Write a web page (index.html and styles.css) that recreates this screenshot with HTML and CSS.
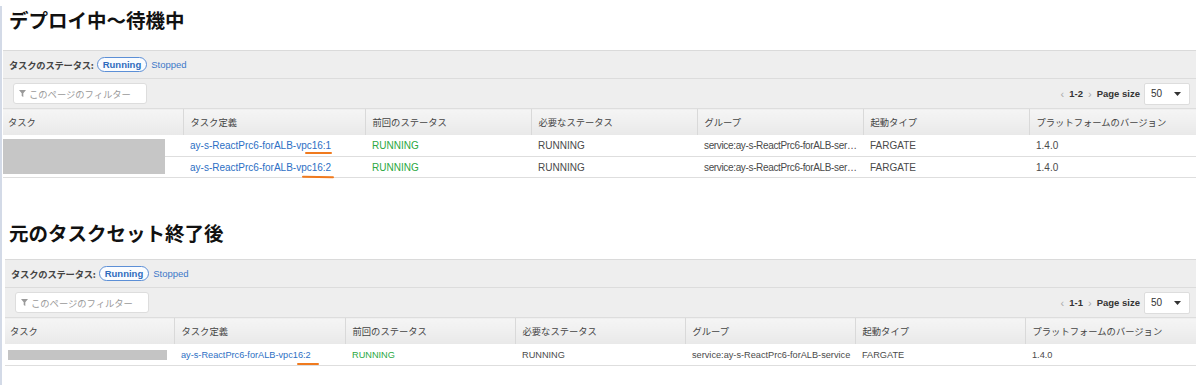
FILE: index.html
```html
<!DOCTYPE html>
<html lang="ja">
<head>
<meta charset="utf-8">
<link rel="stylesheet" href="styles.css">
</head>
<body>
<div class="page">
  <section class="sec sec1">
    <h2 class="title">デプロイ中～待機中</h2>
    <div class="panel">
      <div class="status-bar">
        <span class="status-label">タスクのステータス:</span>
        <span class="pill">Running</span>
        <span class="stopped">Stopped</span>
      </div>
      <div class="toolbar">
        <div class="filter">
          <svg class="funnel" width="7" height="7" viewBox="0 0 7 7"><path d="M0 0H7L4.3 3.2V7L2.7 6V3.2Z" fill="#9a9a9a"/></svg>
          <span class="placeholder">このページのフィルター</span>
        </div>
        <div class="pager">
          <span class="arrow">‹</span>
          <span class="range">1-2</span>
          <span class="arrow">›</span>
          <span class="ps">Page size</span>
          <div class="select"><span>50</span><svg width="7" height="4" viewBox="0 0 7 4"><path d="M0 0H7L3.5 4Z" fill="#333"/></svg></div>
        </div>
      </div>
      <div class="table-wrap">
        <table class="grid">
          <colgroup>
            <col class="c1a"><col class="c2a"><col class="c3a"><col class="c3a"><col class="c3a"><col class="c3a"><col>
          </colgroup>
          <thead>
            <tr><th>タスク</th><th>タスク定義</th><th>前回のステータス</th><th>必要なステータス</th><th>グループ</th><th>起動タイプ</th><th>プラットフォームのバージョン</th></tr>
          </thead>
          <tbody>
            <tr>
              <td></td>
              <td class="lk"><span class="link">ay-s-ReactPrc6-forALB-vpc<span class="tail">16:1<i class="ul ul1"></i></span></span></td>
              <td class="green">RUNNING</td>
              <td>RUNNING</td>
              <td class="grp">service:ay-s-ReactPrc6-forALB-service</td>
              <td>FARGATE</td>
              <td>1.4.0</td>
            </tr>
            <tr>
              <td></td>
              <td class="lk"><span class="link">ay-s-ReactPrc6-forALB-vpc<span class="tail">16:2<i class="ul ul2"></i></span></span></td>
              <td class="green">RUNNING</td>
              <td>RUNNING</td>
              <td class="grp">service:ay-s-ReactPrc6-forALB-service</td>
              <td>FARGATE</td>
              <td>1.4.0</td>
            </tr>
          </tbody>
        </table>
        <div class="redact"></div>
      </div>
    </div>
  </section>

  <section class="sec sec2">
    <h2 class="title">元のタスクセット終了後</h2>
    <div class="panel">
      <div class="status-bar">
        <span class="status-label">タスクのステータス:</span>
        <span class="pill">Running</span>
        <span class="stopped">Stopped</span>
      </div>
      <div class="toolbar">
        <div class="filter">
          <svg class="funnel" width="7" height="7" viewBox="0 0 7 7"><path d="M0 0H7L4.3 3.2V7L2.7 6V3.2Z" fill="#9a9a9a"/></svg>
          <span class="placeholder">このページのフィルター</span>
        </div>
        <div class="pager">
          <span class="arrow">‹</span>
          <span class="range">1-1</span>
          <span class="arrow">›</span>
          <span class="ps">Page size</span>
          <div class="select"><span>50</span><svg width="7" height="4" viewBox="0 0 7 4"><path d="M0 0H7L3.5 4Z" fill="#333"/></svg></div>
        </div>
      </div>
      <div class="table-wrap">
        <table class="grid">
          <colgroup>
            <col class="c1b"><col class="c2b"><col class="c3b"><col class="c3b"><col class="c3b"><col class="c3b"><col>
          </colgroup>
          <thead>
            <tr><th>タスク</th><th>タスク定義</th><th>前回のステータス</th><th>必要なステータス</th><th>グループ</th><th>起動タイプ</th><th>プラットフォームのバージョン</th></tr>
          </thead>
          <tbody>
            <tr class="single">
              <td class="barcell"><span class="bar"></span></td>
              <td class="lk"><span class="link">ay-s-ReactPrc6-forALB-vpc<span class="tail">16:2<i class="ul ul3"></i></span></span></td>
              <td class="green">RUNNING</td>
              <td>RUNNING</td>
              <td class="grp">service:ay-s-ReactPrc6-forALB-service</td>
              <td>FARGATE</td>
              <td>1.4.0</td>
            </tr>
          </tbody>
        </table>
      </div>
    </div>
  </section>
</div>
</body>
</html>
```

FILE: styles.css
```css
html, body {
  margin: 0;
  padding: 0;
  background: #ffffff;
}
body {
  font-family: "Liberation Sans", Arial, "Noto Sans CJK JP", sans-serif;
  font-size: 10px;
  color: #444;
}
.page {
  border-left: 2px solid #d3dae7;
  min-height: 385px;
  box-sizing: border-box;
  padding-right: 4px;
}
.title {
  margin: 6px 0 16px 0;
  padding-left: 7px;
  font-family: "Noto Sans CJK JP", sans-serif;
  font-size: 19.5px;
  line-height: 28px;
  font-weight: 700;
  color: #111;
}
.sec2 .title {
  margin-top: 41px;
  margin-bottom: 12px;
}
.panel {
  background: #eeeeee;
  border-top: 1px solid #dadada;
}
.sec1 .panel { margin-left: 1px; }
.sec2 .panel { margin-left: 3px; }

.status-bar {
  height: 27px;
  display: flex;
  align-items: center;
  padding-left: 6px;
  border-bottom: 1px solid #dcdcdc;
  font-size: 9.5px;
}
.status-label {
  font-family: "Noto Sans CJK JP", sans-serif;
  font-weight: 700;
  font-size: 9.3px;
  color: #444;
  letter-spacing: -0.2px;
}
.pill {
  margin-left: 3px;
  height: 13px;
  line-height: 13px;
  padding: 0 5px;
  border: 1px solid #5c8fd6;
  border-radius: 8px;
  color: #2e6bbd;
  font-weight: 700;
  background: #fafcff;
}
.stopped {
  margin-left: 4px;
  color: #3d78c8;
}
.toolbar {
  height: 29px;
  display: flex;
  align-items: center;
  justify-content: space-between;
}
.filter {
  margin-left: 10px;
  width: 127px;
  height: 19px;
  background: #fff;
  border: 1px solid #dddddd;
  border-radius: 3px;
  display: flex;
  align-items: center;
  padding-left: 5px;
}
.funnel { margin-right: 3px; }
.placeholder {
  font-family: "Noto Sans CJK JP", sans-serif;
  font-size: 9.3px;
  color: #9a9a9a;
}
.pager {
  display: flex;
  align-items: center;
  margin-right: 6px;
  font-size: 9.5px;
}
.arrow {
  color: #aaaaaa;
  font-size: 11px;
  margin: 0 5px;
}
.range { font-weight: 700; color: #333; }
.ps { font-weight: 700; color: #333; margin-right: 4px; }
.select {
  width: 30px;
  height: 20px;
  background: #fff;
  border: 1px solid #dddddd;
  border-radius: 2px;
  display: flex;
  align-items: center;
  justify-content: space-between;
  padding: 0 8px 0 6px;
  color: #333;
  font-size: 10px;
}

.table-wrap { position: relative; }
.grid {
  width: 100%;
  border-collapse: collapse;
  table-layout: fixed;
  background: #fff;
}
.c1a { width: 180px; }
.c2a { width: 182px; }
.c3a { width: 166px; }
.c1b { width: 169px; }
.c2b { width: 171px; }
.c3b { width: 170px; }

.grid th {
  height: 26px;
  text-align: left;
  font-family: "Noto Sans CJK JP", sans-serif;
  font-weight: 400;
  font-size: 9.3px;
  color: #444;
  padding: 0 0 0 7px;
  background: linear-gradient(#f5f5f5, #e9e9e9);
  border-top: 1px solid #dddddd;
  border-left: 1px solid #d9d9d9;
  white-space: nowrap;
  overflow: hidden;
}
.grid th:first-child { border-left: none; padding-left: 5px; }
.grid td {
  height: 20px;
  padding: 0 0 0 7px;
  border-bottom: 1px solid #dedede;
  white-space: nowrap;
  overflow: hidden;
  text-overflow: ellipsis;
  color: #4a4a4a;
}
.sec2 .grid td { font-size: 9.2px; }
.grid tbody tr:first-child td { height: 21px; }
.grid td.lk { overflow: visible; }
.sec1 .grid td.grp { letter-spacing: -0.35px; padding-right: 3px; }
.grid td.green { color: #2aa83f; }
.link { color: #2d6fc4; }
.tail { position: relative; }
.grid td.barcell { padding-left: 3px; }
.bar {
  display: inline-block;
  width: 159px;
  height: 10px;
  background: #c4c4c4;
  vertical-align: middle;
}
.redact {
  position: absolute;
  left: 0;
  top: 31px;
  width: 162px;
  height: 35px;
  background: #c6c6c6;
}
.ul {
  position: absolute;
  height: 2px;
  background: #f07a1e;
  border-radius: 1px;
}
.ul1 { left: -7px; right: -1px; bottom: -3px; }
.ul2 { left: -10px; right: -3px; bottom: -5px; transform: rotate(1deg); }
.ul3 { left: 4px; right: -8px; bottom: -5px; }
```
